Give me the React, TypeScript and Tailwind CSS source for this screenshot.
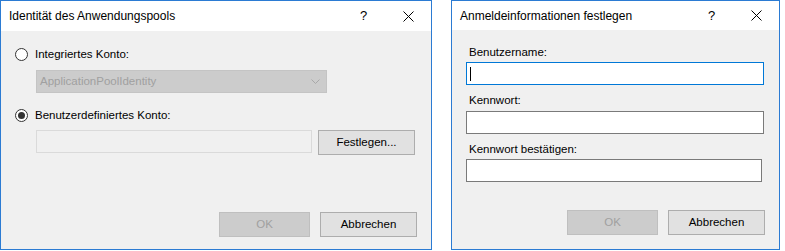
import React from 'react';

const CloseIcon = () => (
  <svg width="11" height="11" viewBox="0 0 11 11" className="block">
    <path d="M0.5 0.5 L10.5 10.5 M10.5 0.5 L0.5 10.5" stroke="#000" strokeWidth="1" fill="none" />
  </svg>
);

const TitleBar: React.FC<{ title: string; height: string }> = ({ title, height }) => (
  <div className={`flex ${height} shrink-0 items-center bg-white text-[12px]`}>
    <span className="flex-1 pl-2">{title}</span>
    <span className="flex w-[45px] justify-center text-[13px]">?</span>
    <span className="flex w-[45px] items-center justify-center">
      <CloseIcon />
    </span>
  </div>
);

const Radio: React.FC<{ checked?: boolean; label: string }> = ({ checked, label }) => (
  <div className="flex h-[13px] items-center gap-[7px]">
    <span className="flex h-[13px] w-[13px] items-center justify-center rounded-full border border-[#333333] bg-white">
      {checked && <span className="h-[7px] w-[7px] rounded-full bg-[#333333]" />}
    </span>
    <span className="whitespace-nowrap">{label}</span>
  </div>
);

const Button: React.FC<{ label: string; width: string; disabled?: boolean }> = ({ label, width, disabled }) => (
  <div
    className={`flex h-[25px] ${width} items-center justify-center border ${
      disabled ? 'border-[#bfbfbf] bg-[#cccccc] text-[#a0a0a0]' : 'border-[#adadad] bg-[#e1e1e1] text-black'
    }`}
  >
    {label}
  </div>
);

export default function App() {
  return (
    <div className="flex h-[251px] w-[785px] items-start bg-white font-['Liberation_Sans',Arial,sans-serif] text-[11.5px] text-black">
      {/* Identität des Anwendungspools */}
      <div className="flex h-[250px] w-[432px] flex-col border border-[#2b7bd3] bg-[#f0f0f0]">
        <TitleBar title="Identität des Anwendungspools" height="h-[30px]" />
        <div className="flex flex-col pl-[14px]">
          <div className="mt-[17px]">
            <Radio label="Integriertes Konto:" />
          </div>
          <div className="ml-[21px] mt-[9px] flex h-[23px] w-[291px] items-center justify-between border border-[#c4c4c4] bg-[#cccccc] pl-[3px] pr-[6px] text-[#a0a0a0]">
            <span>ApplicationPoolIdentity</span>
            <svg width="9" height="5" viewBox="0 0 9 5">
              <path d="M0.5 0.5 L4.5 4.5 L8.5 0.5" stroke="#a8a8a8" fill="none" />
            </svg>
          </div>
          <div className="mt-[16px]">
            <Radio checked label="Benutzerdefiniertes Konto:" />
          </div>
          <div className="ml-[21px] mt-[8px] flex items-start gap-[6px]">
            <div className="h-[23px] w-[276px] border border-[#dadada] bg-[#f0f0f0]" />
            <Button label="Festlegen..." width="w-[97px]" />
          </div>
          <div className="mt-[57px] flex justify-end gap-[10px] pr-[14px]">
            <Button label="OK" width="w-[91px]" disabled />
            <Button label="Abbrechen" width="w-[97px]" />
          </div>
        </div>
      </div>

      <div className="w-[19px] shrink-0" />

      {/* Anmeldeinformationen festlegen */}
      <div className="flex h-[250px] w-[329px] flex-col border border-[#2b7bd3] bg-[#f0f0f0]">
        <TitleBar title="Anmeldeinformationen festlegen" height="h-[29px]" />
        <div className="flex flex-col px-[14px]">
          <label className="mt-[14px] block h-[16px] pl-[3px] leading-[16px]">Benutzername:</label>
          <div className="mt-[2px] flex h-[23px] w-[298px] items-center border border-[#0078d7] bg-white pl-[3px]">
            <span className="h-[14px] w-px bg-black" />
          </div>
          <label className="mt-[7px] block h-[16px] pl-[3px] leading-[16px]">Kennwort:</label>
          <div className="mt-[3px] h-[23px] w-[298px] border border-[#7a7a7a] bg-white" />
          <label className="mt-[7px] block h-[16px] pl-[3px] leading-[16px]">Kennwort bestätigen:</label>
          <div className="mt-[2px] h-[23px] w-[296px] border border-[#7a7a7a] bg-white" />
          <div className="mt-[28px] flex justify-end gap-[10px]">
            <Button label="OK" width="w-[91px]" disabled />
            <Button label="Abbrechen" width="w-[97px]" />
          </div>
        </div>
      </div>
    </div>
  );
}
